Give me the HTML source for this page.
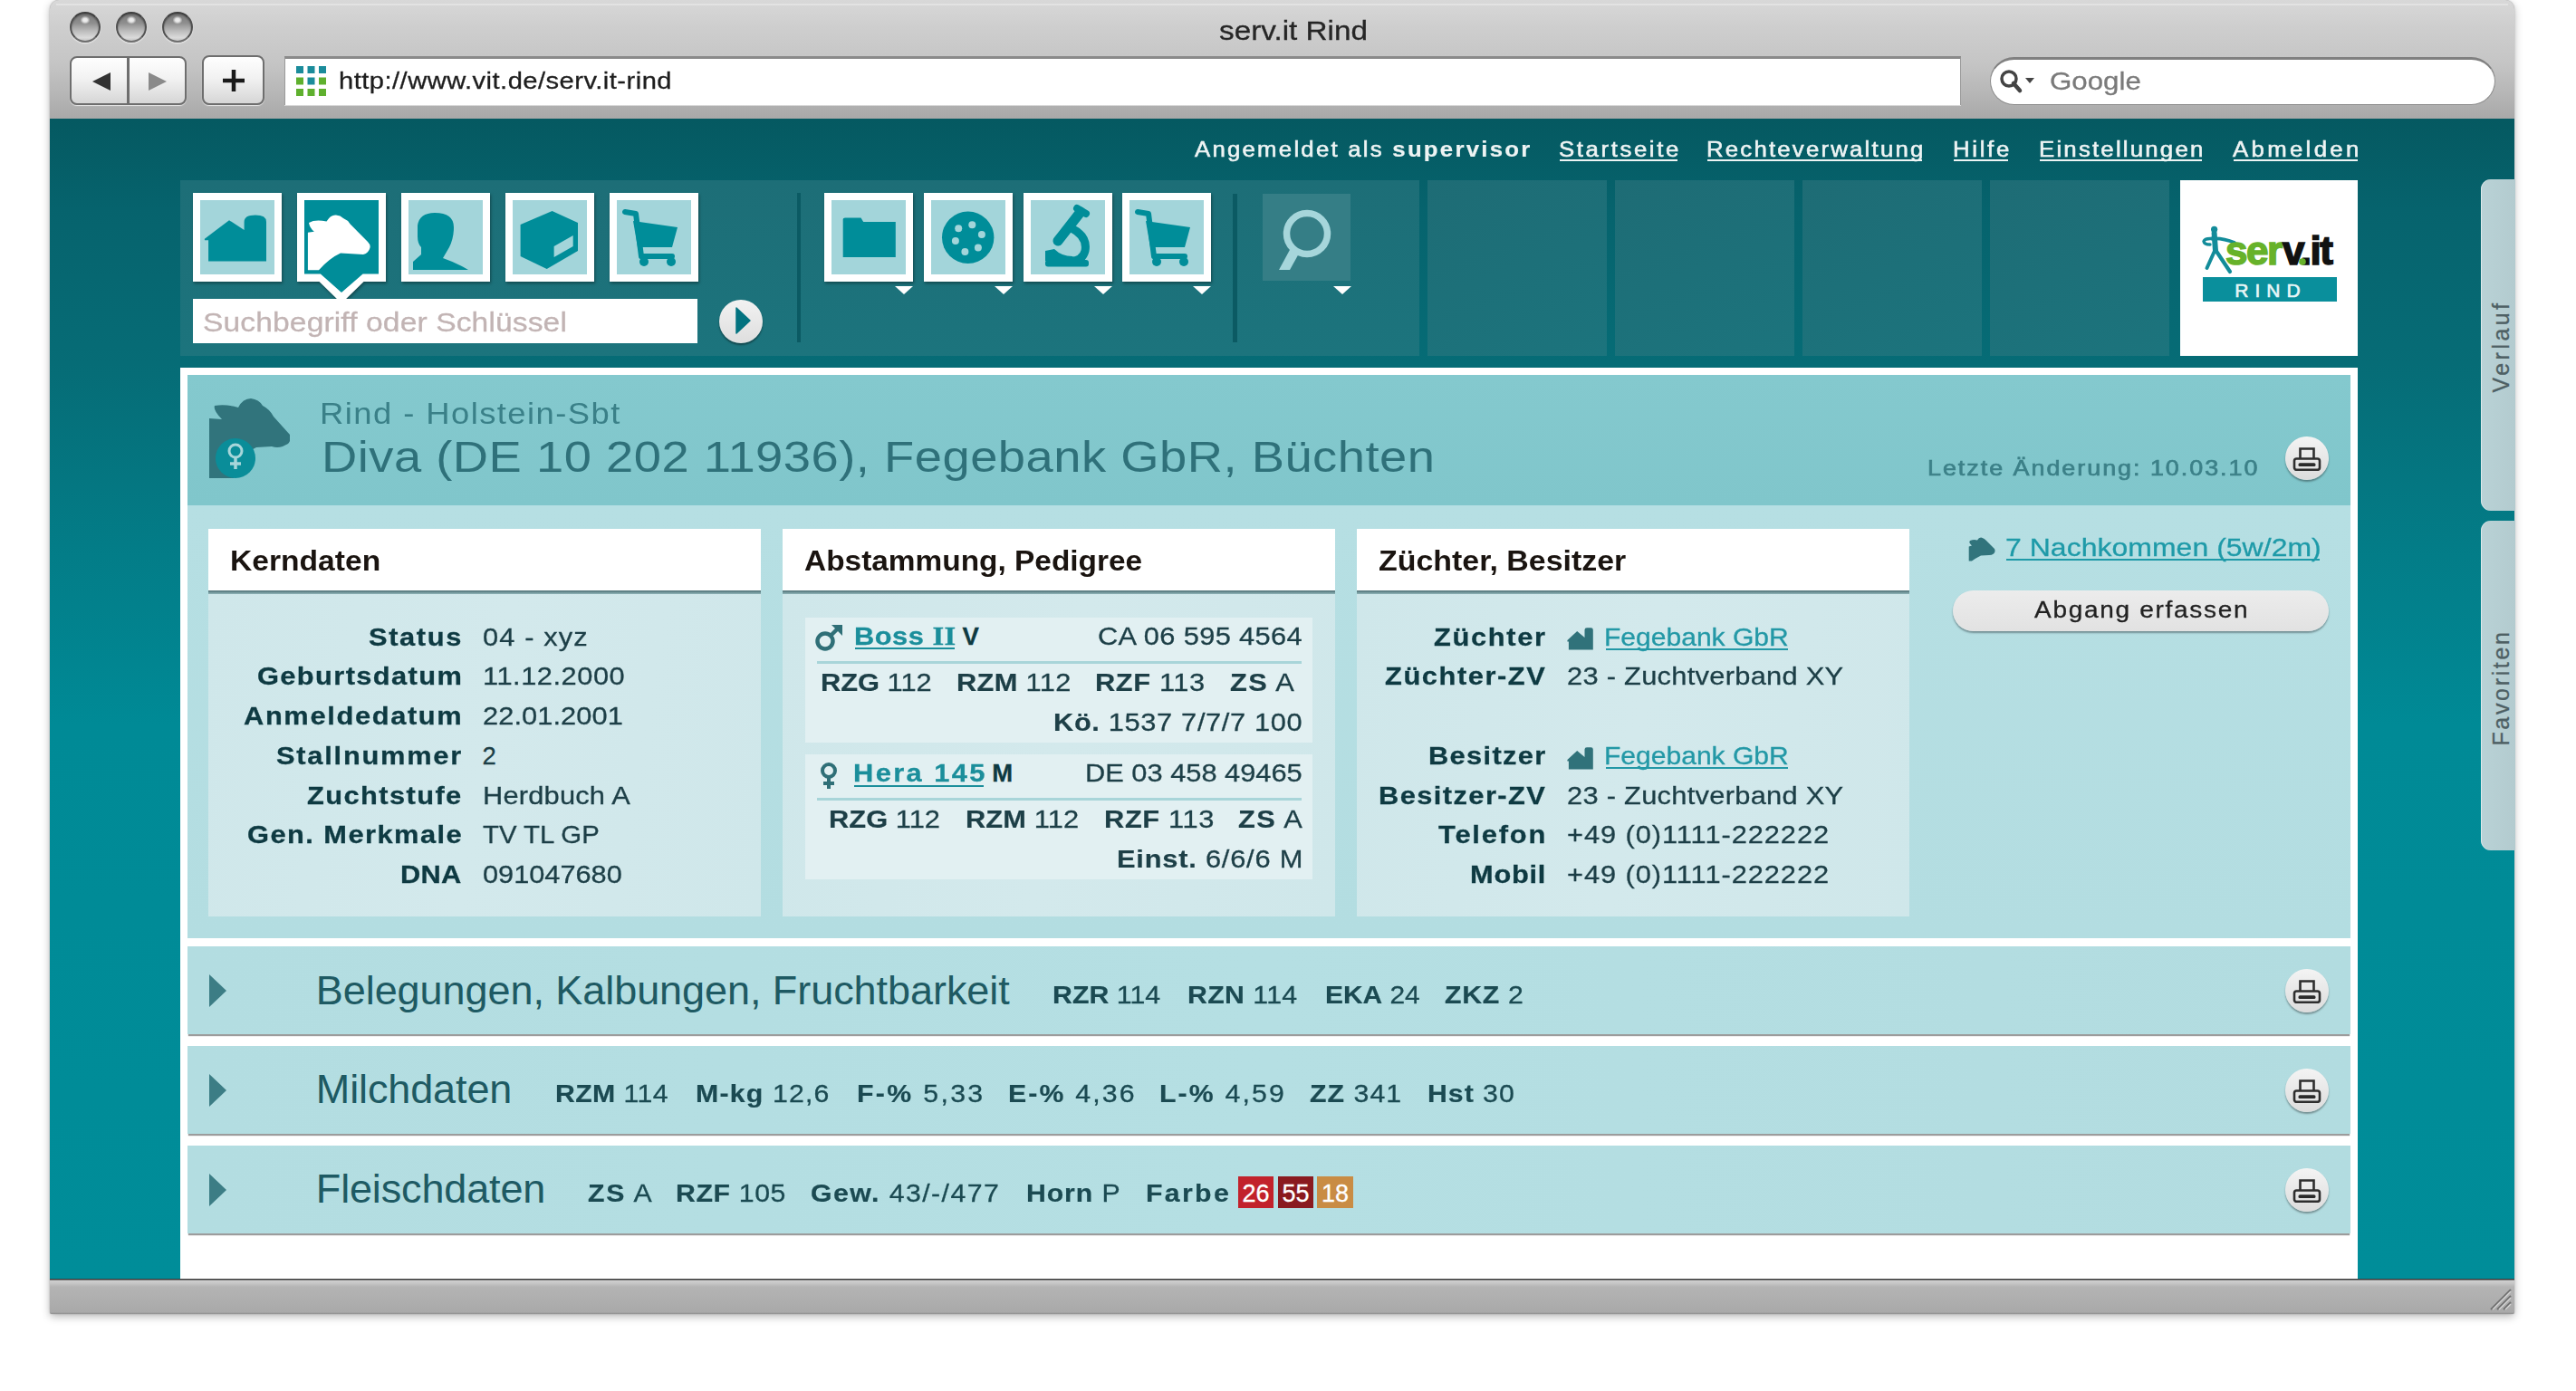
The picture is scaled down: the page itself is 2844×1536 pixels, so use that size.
<!DOCTYPE html>
<html><head><meta charset="utf-8"><title>serv.it Rind</title>
<style>
html,body{margin:0;padding:0;width:2844px;height:1536px;background:#fff;}
body{position:relative;font-family:"Liberation Sans", sans-serif;}
.t{position:absolute;white-space:pre;-webkit-text-stroke:0.3px currentColor;}
.t b{-webkit-text-stroke:0.2px currentColor;}
svg{display:block}
</style></head><body>
<div style="position:absolute;left:55px;top:0px;width:2721px;height:1451px;background:#aaa;border-radius:10px 10px 3px 3px;box-shadow:0 3px 10px rgba(0,0,0,0.28),0 0 2px rgba(0,0,0,0.25);"></div>
<div style="position:absolute;left:55px;top:0px;width:2721px;height:131px;background:linear-gradient(#d8d8d8 0px,#cecece 30px,#c5c5c5 70px,#b3b3b3 110px,#a8a8a8 131px);border-radius:10px 10px 0 0;"></div>
<div style="position:absolute;left:62px;top:4px;width:2707px;height:2px;background:rgba(255,255,255,0.3);"></div>
<div style="position:absolute;left:77px;top:12.5px;width:34px;height:34px;box-sizing:border-box;border-radius:50%;border:2.6px solid;border-color:#3e3e3e #505050 #6e6e6e #505050;background:radial-gradient(ellipse 5.5px 4.5px at 50% 24%,#f2f2f2 0%,#e6e6e6 45%,rgba(200,200,200,0) 100%),linear-gradient(#7c7c7c 0%,#8e8e8e 35%,#bdbdbd 65%,#dadada 88%,#c9c9c9 100%);box-shadow:0 1px 1.5px rgba(255,255,255,0.75),inset 0 1px 2px rgba(0,0,0,0.35);"></div>
<div style="position:absolute;left:128px;top:12.5px;width:34px;height:34px;box-sizing:border-box;border-radius:50%;border:2.6px solid;border-color:#3e3e3e #505050 #6e6e6e #505050;background:radial-gradient(ellipse 5.5px 4.5px at 50% 24%,#f2f2f2 0%,#e6e6e6 45%,rgba(200,200,200,0) 100%),linear-gradient(#7c7c7c 0%,#8e8e8e 35%,#bdbdbd 65%,#dadada 88%,#c9c9c9 100%);box-shadow:0 1px 1.5px rgba(255,255,255,0.75),inset 0 1px 2px rgba(0,0,0,0.35);"></div>
<div style="position:absolute;left:179px;top:12.5px;width:34px;height:34px;box-sizing:border-box;border-radius:50%;border:2.6px solid;border-color:#3e3e3e #505050 #6e6e6e #505050;background:radial-gradient(ellipse 5.5px 4.5px at 50% 24%,#f2f2f2 0%,#e6e6e6 45%,rgba(200,200,200,0) 100%),linear-gradient(#7c7c7c 0%,#8e8e8e 35%,#bdbdbd 65%,#dadada 88%,#c9c9c9 100%);box-shadow:0 1px 1.5px rgba(255,255,255,0.75),inset 0 1px 2px rgba(0,0,0,0.35);"></div>
<div style="position:absolute;left:77px;top:62px;width:129px;height:54px;background:linear-gradient(#fefefe,#f2f2f2 45%,#d6d6d6);border:2px solid #6e6e6e;box-sizing:border-box;border-radius:8px;box-shadow:0 1px 1px rgba(255,255,255,0.7);"></div>
<div style="position:absolute;left:140px;top:63px;width:3px;height:52px;background:#6e6e6e;"></div>
<svg style="position:absolute;left:100px;top:78px;" width="35" height="24" viewBox="0 0 35 24"><path d="M2,12 L22,2 L22,22 Z" fill="#333"/></svg>
<svg style="position:absolute;left:160px;top:78px;" width="35" height="24" viewBox="0 0 35 24"><path d="M32,12 L12,2 L12,22 Z" fill="#8a8a8a" transform="translate(-8,0)"/></svg>
<div style="position:absolute;left:223px;top:61px;width:69px;height:55px;background:linear-gradient(#fefefe,#f2f2f2 45%,#d6d6d6);border:2px solid #6e6e6e;box-sizing:border-box;border-radius:8px;box-shadow:0 1px 1px rgba(255,255,255,0.7);"></div>
<svg style="position:absolute;left:244px;top:75px;" width="28" height="28" viewBox="0 0 28 28"><path d="M14,2 V26 M2,14 H26" stroke="#1a1a1a" stroke-width="4.5" fill="none"/></svg>
<div style="position:absolute;left:314px;top:62px;width:1851px;height:54px;background:#fff;border-top:3px solid #8a8a8a;border-left:1px solid #9a9a9a;border-right:1px solid #9a9a9a;box-sizing:border-box;box-shadow:0 1px 0 rgba(255,255,255,0.5);"></div>
<svg style="position:absolute;left:327px;top:73px;" width="34" height="34" viewBox="0 0 34 34"><rect x="0.0" y="0.0" width="8" height="8" fill="#1b8c9b"/><rect x="12.5" y="0.0" width="8" height="8" fill="#1b8c9b"/><rect x="25.0" y="0.0" width="8" height="8" fill="#1b8c9b"/><rect x="0.0" y="12.5" width="8" height="8" fill="#5fb02e"/><rect x="12.5" y="12.5" width="8" height="8" fill="#1b8c9b"/><rect x="25.0" y="12.5" width="8" height="8" fill="#5fb02e"/><rect x="0.0" y="25.0" width="8" height="8" fill="#5fb02e"/><rect x="12.5" y="25.0" width="8" height="8" fill="#5fb02e"/><rect x="25.0" y="25.0" width="8" height="8" fill="#5fb02e"/></svg>
<div style="position:absolute;left:2197px;top:63px;width:558px;height:53px;background:#fff;border-radius:27px;border:1px solid #8c8c8c;border-top:3px solid #808080;box-sizing:border-box;"></div>
<svg style="position:absolute;left:2206px;top:76px;" width="46" height="30" viewBox="0 0 46 30"><circle cx="12" cy="11" r="8" stroke="#444" stroke-width="3.5" fill="none"/><path d="M17,16 L24,24" stroke="#444" stroke-width="4.5" stroke-linecap="round"/><path d="M30,10 L40,10 L35,16 Z" fill="#444"/></svg>
<div style="position:absolute;left:55px;top:131px;width:2721px;height:1281px;background:linear-gradient(#055961 0px,#06636d 100px,#066c76 270px,#037c87 470px,#008a96 670px,#008d99 1281px);"></div>
<div style="position:absolute;left:55px;top:1412px;width:2721px;height:39px;background:linear-gradient(#3a3a3a 0px,#3a3a3a 1px,#cfcfcf 2px,#c6c6c6 5px,#b4b4b4 9px,#a9a9a9 37px,#8e8e8e 39px);border-radius:0 0 2px 2px;"></div>
<svg style="position:absolute;left:2748px;top:1422px;" width="26" height="26" viewBox="0 0 26 26"><path d="M2,24 L24,2 M9,24 L24,9 M16,24 L24,16" stroke="#707070" stroke-width="2"/><path d="M4,24 L24,4 M11,24 L24,11 M18,24 L24,18" stroke="#d6d6d6" stroke-width="1.3"/></svg>
<div style="position:absolute;left:2739px;top:198px;width:38px;height:366px;background:linear-gradient(90deg,#b9d2d6,#b3cbcf);border-radius:11px 0 0 11px;box-shadow:inset 1px 0 0 rgba(255,255,255,0.5);"></div>
<div style="position:absolute;left:2739px;top:575px;width:38px;height:364px;background:linear-gradient(90deg,#b9d2d6,#b3cbcf);border-radius:11px 0 0 11px;box-shadow:inset 1px 0 0 rgba(255,255,255,0.5);"></div>
<div style="position:absolute;left:199px;top:199px;width:1368px;height:194px;background:linear-gradient(180deg,#1d6e77,#1c747d);"></div>
<div style="position:absolute;left:1576px;top:199px;width:198px;height:194px;background:linear-gradient(160deg,#1e6c75,#1c747d);"></div>
<div style="position:absolute;left:1783px;top:199px;width:198px;height:194px;background:linear-gradient(160deg,#1e6c75,#1c747d);"></div>
<div style="position:absolute;left:1990px;top:199px;width:198px;height:194px;background:linear-gradient(160deg,#1e6c75,#1c747d);"></div>
<div style="position:absolute;left:2197px;top:199px;width:198px;height:194px;background:linear-gradient(160deg,#1e6c75,#1c747d);"></div>
<div style="position:absolute;left:2407px;top:199px;width:196px;height:194px;background:#fff;"></div>
<div style="position:absolute;left:213px;top:213px;width:98px;height:98px;background:#fff;box-shadow:1px 2px 3px rgba(0,0,0,0.35);"></div>
<div style="position:absolute;left:221px;top:221px;width:82px;height:82px;background:#a3d5da;"></div>
<svg style="position:absolute;left:221px;top:221px;" width="82" height="82" viewBox="0 0 82 82"><path d="M4.9,42.7 L32,22.2 L48.6,33 L48.6,24 Q48.6,16.6 61,16.6 Q73,16.6 73,24 L73,67.5 L9.1,67.5 L9.1,44.2 L4.9,44.2 Z" fill="#008d99"/></svg>
<div style="position:absolute;left:443px;top:213px;width:98px;height:98px;background:#fff;box-shadow:1px 2px 3px rgba(0,0,0,0.35);"></div>
<div style="position:absolute;left:451px;top:221px;width:82px;height:82px;background:#a3d5da;"></div>
<svg style="position:absolute;left:451px;top:221px;" width="82" height="82" viewBox="0 0 82 82"><path d="M5,68 L14,60 L14,52 Q10,48 10,40 L10,28 Q12,14 29,14 Q50,14 50,30 Q50,42 45,52 L38,64 Q55,70 66,77 L5,77 Z" fill="#008d99"/></svg>
<div style="position:absolute;left:558px;top:213px;width:98px;height:98px;background:#fff;box-shadow:1px 2px 3px rgba(0,0,0,0.35);"></div>
<div style="position:absolute;left:566px;top:221px;width:82px;height:82px;background:#a3d5da;"></div>
<svg style="position:absolute;left:566px;top:221px;" width="82" height="82" viewBox="0 0 82 82"><path d="M8.6,27 L43.6,12 L72,25 L72,56 L37.7,76 L8.6,62 Z" fill="#008d99"/><path d="M45.6,51 L66.7,39 L66.7,51 L45.6,63 Z" fill="#a3d5da"/></svg>
<div style="position:absolute;left:673px;top:213px;width:98px;height:98px;background:#fff;box-shadow:1px 2px 3px rgba(0,0,0,0.35);"></div>
<div style="position:absolute;left:681px;top:221px;width:82px;height:82px;background:#a3d5da;"></div>
<svg style="position:absolute;left:681px;top:221px;" width="82" height="82" viewBox="0 0 82 82"><path d="M9,13 L21,15 L27,62 L61,62" stroke="#008d99" stroke-width="6" fill="none" stroke-linecap="round" stroke-linejoin="round"/><path d="M18,23 L67,30 L61,52 L23,52 Z" fill="#008d99"/><circle cx="30" cy="68" r="5" fill="#008d99"/><circle cx="60" cy="68" r="5" fill="#008d99"/></svg>
<svg style="position:absolute;left:328px;top:213px;filter:drop-shadow(1px 2px 1.5px rgba(0,0,0,0.35));" width="100" height="126" viewBox="0 0 100 126"><path d="M0,0 H98 V98 H73.6 L49,122 L24.5,98 H0 Z" fill="#fff"/><path d="M8,8 H90 V89.5 H72.6 L49,110 L25.9,89.5 H8 Z" fill="#008d99"/><path transform="translate(8,8)" d="M3.9,77.3 L3.9,35.7 L10.9,34.8 Q6,31 5,25 Q12,21 24.5,23.6 Q29,16 35,16.6 Q40,17 43,20 Q48,22 50.7,26.4 L70,46 Q74,50 72,54 Q70,59 65,60 L40,58.6 Q28,64 16,77.3 Z" fill="#fff"/></svg>
<div style="position:absolute;left:213px;top:330px;width:557px;height:49px;background:#fff;"></div>
<div style="position:absolute;left:794px;top:331px;width:48px;height:48px;border-radius:50%;background:linear-gradient(#f2f2f2,#dedede);box-shadow:0 2px 2px rgba(0,0,0,0.4);"></div>
<svg style="position:absolute;left:810px;top:338px;" width="22" height="32" viewBox="0 0 22 32"><path d="M3,2 L18,16 L3,30 Z" fill="#037380" stroke="#037380" stroke-width="1.5" stroke-linejoin="round"/></svg>
<div style="position:absolute;left:880px;top:213px;width:4px;height:165px;background:#0b5a63;"></div>
<div style="position:absolute;left:910px;top:213px;width:98px;height:98px;background:#fff;box-shadow:1px 2px 3px rgba(0,0,0,0.35);"></div>
<div style="position:absolute;left:918px;top:221px;width:82px;height:82px;background:#a3d5da;"></div>
<svg style="position:absolute;left:918px;top:221px;" width="82" height="82" viewBox="0 0 82 82"><path d="M12.7,21 Q12.7,19.4 15,19.4 L32.5,19.4 L35.2,24 L70.8,24 L70.8,63 L12.7,63 Z" fill="#008d99"/></svg>
<svg style="position:absolute;left:988px;top:316px;" width="20" height="10" viewBox="0 0 20 10"><path d="M0,0 L20,0 L10,9 Z" fill="#fff"/></svg>
<div style="position:absolute;left:1020px;top:213px;width:98px;height:98px;background:#fff;box-shadow:1px 2px 3px rgba(0,0,0,0.35);"></div>
<div style="position:absolute;left:1028px;top:221px;width:82px;height:82px;background:#a3d5da;"></div>
<svg style="position:absolute;left:1028px;top:221px;" width="82" height="82" viewBox="0 0 82 82"><circle cx="40.7" cy="41.2" r="28.7" fill="#008d99"/><circle cx="45.3" cy="27.3" r="4" fill="#a3d5da"/><circle cx="55.9" cy="37.9" r="4" fill="#a3d5da"/><circle cx="51.9" cy="52.4" r="4" fill="#a3d5da"/><circle cx="37.4" cy="57" r="4" fill="#a3d5da"/><circle cx="26.9" cy="45.1" r="4" fill="#a3d5da"/><circle cx="30.2" cy="31.3" r="4" fill="#a3d5da"/></svg>
<svg style="position:absolute;left:1098px;top:316px;" width="20" height="10" viewBox="0 0 20 10"><path d="M0,0 L20,0 L10,9 Z" fill="#fff"/></svg>
<div style="position:absolute;left:1130px;top:213px;width:98px;height:98px;background:#fff;box-shadow:1px 2px 3px rgba(0,0,0,0.35);"></div>
<div style="position:absolute;left:1138px;top:221px;width:82px;height:82px;background:#a3d5da;"></div>
<svg style="position:absolute;left:1138px;top:221px;" width="82" height="82" viewBox="0 0 82 82"><g stroke="#008d99" fill="none" stroke-linecap="round"><path d="M55,13 L30,45" stroke-width="11"/><path d="M51,9 L61,15" stroke-width="8"/><path d="M45,31 Q63,40 60,56 Q57,68 42,67" stroke-width="9"/></g><path d="M16,56 L26,54 Q34,62 46,62 L46,67 L16,67 Z" fill="#008d99"/><rect x="16" y="66" width="48" height="7.5" rx="3" fill="#008d99"/></svg>
<svg style="position:absolute;left:1208px;top:316px;" width="20" height="10" viewBox="0 0 20 10"><path d="M0,0 L20,0 L10,9 Z" fill="#fff"/></svg>
<div style="position:absolute;left:1239px;top:213px;width:98px;height:98px;background:#fff;box-shadow:1px 2px 3px rgba(0,0,0,0.35);"></div>
<div style="position:absolute;left:1247px;top:221px;width:82px;height:82px;background:#a3d5da;"></div>
<svg style="position:absolute;left:1247px;top:221px;" width="82" height="82" viewBox="0 0 82 82"><path d="M9,13 L21,15 L27,62 L61,62" stroke="#008d99" stroke-width="6" fill="none" stroke-linecap="round" stroke-linejoin="round"/><path d="M18,23 L67,30 L61,52 L23,52 Z" fill="#008d99"/><circle cx="30" cy="68" r="5" fill="#008d99"/><circle cx="60" cy="68" r="5" fill="#008d99"/></svg>
<svg style="position:absolute;left:1317px;top:316px;" width="20" height="10" viewBox="0 0 20 10"><path d="M0,0 L20,0 L10,9 Z" fill="#fff"/></svg>
<div style="position:absolute;left:1361px;top:214px;width:5px;height:164px;background:#0b5a63;"></div>
<div style="position:absolute;left:1394px;top:214px;width:97px;height:96px;background:#357e86;"></div>
<svg style="position:absolute;left:1394px;top:214px;" width="97" height="97" viewBox="0 0 97 97"><circle cx="49" cy="44" r="22.5" stroke="#a6d6db" stroke-width="7.5" fill="none"/><path d="M31,60 L18,84 L30,84 L40,66 Z" fill="#a6d6db"/></svg>
<svg style="position:absolute;left:1472px;top:316px;" width="20" height="10" viewBox="0 0 20 10"><path d="M0,0 L20,0 L10,9 Z" fill="#fff"/></svg>
<svg style="position:absolute;left:2426px;top:248px;" width="160" height="90" viewBox="0 0 160 90">
<g fill="none" stroke="#138c9a" stroke-linecap="round" stroke-linejoin="round">
<circle cx="18.6" cy="5.3" r="3.6" fill="#138c9a" stroke="none"/>
<path d="M18.6,9.5 L20,29" stroke-width="6"/>
<path d="M16,15.5 Q28,14.5 41,20" stroke-width="3.8"/>
<path d="M16,15.5 Q8,15 7,18.5 Q7.5,22 14,22" stroke-width="3.4"/>
<path d="M19.5,28 L10.5,48" stroke-width="4"/>
<path d="M20,28 L36,52" stroke-width="4.2"/>
</g>
<text x="31" y="44" font-family="Liberation Sans" font-weight="bold" font-size="44" fill="#67b22a" stroke="#67b22a" stroke-width="1.6" letter-spacing="-1.5">ser</text>
<text x="94" y="44" font-family="Liberation Sans" font-weight="bold" font-size="44" fill="#111" stroke="#111" stroke-width="1.6" letter-spacing="-1.5">v.it</text>
<circle cx="116" cy="41" r="3.8" fill="#67b22a"/>
<rect x="6" y="58" width="148" height="27" fill="#0a8f9c"/>
<text x="81" y="79.5" text-anchor="middle" font-family="Liberation Sans" font-size="21" fill="#e8f6f7" stroke="#e8f6f7" stroke-width="0.6" letter-spacing="7">RIND</text>
</svg>
<div style="position:absolute;left:199px;top:406px;width:2404px;height:1006px;background:#fff;"></div>
<div style="position:absolute;left:207px;top:414px;width:2388px;height:144px;background:linear-gradient(180deg,#84c9ce,#80c6cb);"></div>
<div style="position:absolute;left:207px;top:558px;width:2388px;height:478px;background:linear-gradient(180deg,#b6dfe3,#b3dde1);"></div>
<svg style="position:absolute;left:228px;top:438px;" width="92" height="92" viewBox="0 0 92 92"><path d="M3,90 L3,24 L17,25 Q7,15 9,10 Q22,8 35,12 Q40,2 49,2 Q58,3 62,10 Q70,14 74,22 L92,42 Q94,48 90,52 L84,55 Q78,57 72,55 L55,56 Q40,62 30,90 Z" fill="#31747c"/><circle cx="32" cy="68" r="22" fill="#0a8d99"/><circle cx="32" cy="60" r="7" stroke="#a7d6da" stroke-width="3" fill="none"/><path d="M32,67 L32,80 M26,74 L38,74" stroke="#a7d6da" stroke-width="3.5"/></svg>
<div style="position:absolute;left:2523px;top:482px;width:48px;height:48px;border-radius:50%;background:linear-gradient(#f4f4f4,#dcdcdc);box-shadow:0 2px 2px rgba(0,0,0,0.35);"></div>
<svg style="position:absolute;left:2531px;top:493px;" width="32" height="27" viewBox="0 0 32 27"><path d="M8.5,13.5 L8.5,2.5 L23.5,2.5 L23.5,13.5" stroke="#2e2e2e" stroke-width="2.6" fill="none"/><rect x="2" y="13.5" width="28" height="12.3" rx="2.5" stroke="#2e2e2e" stroke-width="2.6" fill="none"/><rect x="6.5" y="18.3" width="19" height="3.8" rx="1.6" fill="#2a2a2a"/></svg>
<div style="position:absolute;left:230px;top:584px;width:610px;height:68px;background:#fff;"></div>
<div style="position:absolute;left:230px;top:652px;width:610px;height:4px;background:linear-gradient(#4d6f74,#8fb4b8);"></div>
<div style="position:absolute;left:230px;top:656px;width:610px;height:356px;background:linear-gradient(100deg,#cfe7ea,#d3e9ec 50%,#cfe7ea);"></div>
<div style="position:absolute;left:864px;top:584px;width:610px;height:68px;background:#fff;"></div>
<div style="position:absolute;left:864px;top:652px;width:610px;height:4px;background:linear-gradient(#4d6f74,#8fb4b8);"></div>
<div style="position:absolute;left:864px;top:656px;width:610px;height:356px;background:linear-gradient(100deg,#cfe7ea,#d3e9ec 50%,#cfe7ea);"></div>
<div style="position:absolute;left:1498px;top:584px;width:610px;height:68px;background:#fff;"></div>
<div style="position:absolute;left:1498px;top:652px;width:610px;height:4px;background:linear-gradient(#4d6f74,#8fb4b8);"></div>
<div style="position:absolute;left:1498px;top:656px;width:610px;height:356px;background:linear-gradient(100deg,#cfe7ea,#d3e9ec 50%,#cfe7ea);"></div>
<div style="position:absolute;left:889px;top:682px;width:560px;height:138px;background:#e2f0f2;"></div>
<div style="position:absolute;left:889px;top:833px;width:560px;height:138px;background:#e2f0f2;"></div>
<div style="position:absolute;left:902px;top:730px;width:535px;height:3px;background:#a8d5d9;"></div>
<div style="position:absolute;left:902px;top:881px;width:535px;height:3px;background:#a8d5d9;"></div>
<svg style="position:absolute;left:899px;top:687px;" width="34" height="34" viewBox="0 0 34 34"><circle cx="12" cy="21" r="8.5" stroke="#2f6f77" stroke-width="4.5" fill="none"/><path d="M18,15 L28,5" stroke="#2f6f77" stroke-width="4.5"/><path d="M19,3 L31,3 L31,15 Z" fill="#2f6f77"/></svg>
<svg style="position:absolute;left:900px;top:841px;" width="30" height="32" viewBox="0 0 30 32"><circle cx="15" cy="10" r="7" stroke="#2f6f77" stroke-width="4" fill="none"/><path d="M15,17 L15,30 M9,24 L21,24" stroke="#2f6f77" stroke-width="4"/></svg>
<svg style="position:absolute;left:1730px;top:693px;" width="30" height="27" viewBox="0 0 30 27"><path d="M0.4,14 L11.2,4 L19.5,11 L19.5,2.5 Q19.5,0.3 22,0.3 L26.5,0.3 Q28.8,0.3 28.8,2.5 L28.8,24.5 L1.9,24.5 L1.9,15.5 L0.4,15.5 Z" fill="#30727a"/></svg>
<svg style="position:absolute;left:1730px;top:825px;" width="30" height="27" viewBox="0 0 30 27"><path d="M0.4,14 L11.2,4 L19.5,11 L19.5,2.5 Q19.5,0.3 22,0.3 L26.5,0.3 Q28.8,0.3 28.8,2.5 L28.8,24.5 L1.9,24.5 L1.9,15.5 L0.4,15.5 Z" fill="#30727a"/></svg>
<svg style="position:absolute;left:2171px;top:591px;" width="34" height="30" viewBox="0 0 34 30"><path d="M2.7,28.6 L2.7,12.4 L6,11.5 Q2,8 4,6 Q8,4.5 12,5.5 Q14,2 17,2.7 Q20,3.5 22,6 L31,15 Q32.5,18 30,20.5 Q28,22 25,22 L16,22.5 Q9,26 6,28.6 Z" fill="#31747c"/></svg>
<div style="position:absolute;left:2156px;top:652px;width:415px;height:45px;border-radius:23px;background:linear-gradient(#ececec,#e2e2e2);box-shadow:0 2px 2px rgba(60,80,85,0.55);"></div>
<div style="position:absolute;left:207px;top:1045px;width:2388px;height:97px;background:linear-gradient(90deg,#b3dde1,#b5dfe3 50%,#b2dce0);box-shadow:0 3px 1px -1px rgba(90,90,90,0.6);"></div>
<svg style="position:absolute;left:230px;top:1075px;" width="22" height="40" viewBox="0 0 22 40"><path d="M1,1 L20,19 L1,37 Z" fill="#3c7d85"/></svg>
<div style="position:absolute;left:2523px;top:1070px;width:48px;height:48px;border-radius:50%;background:linear-gradient(#f4f4f4,#dcdcdc);box-shadow:0 2px 2px rgba(0,0,0,0.35);"></div>
<svg style="position:absolute;left:2531px;top:1081px;" width="32" height="27" viewBox="0 0 32 27"><path d="M8.5,13.5 L8.5,2.5 L23.5,2.5 L23.5,13.5" stroke="#2e2e2e" stroke-width="2.6" fill="none"/><rect x="2" y="13.5" width="28" height="12.3" rx="2.5" stroke="#2e2e2e" stroke-width="2.6" fill="none"/><rect x="6.5" y="18.3" width="19" height="3.8" rx="1.6" fill="#2a2a2a"/></svg>
<div style="position:absolute;left:207px;top:1155px;width:2388px;height:97px;background:linear-gradient(90deg,#b3dde1,#b5dfe3 50%,#b2dce0);box-shadow:0 3px 1px -1px rgba(90,90,90,0.6);"></div>
<svg style="position:absolute;left:230px;top:1185px;" width="22" height="40" viewBox="0 0 22 40"><path d="M1,1 L20,19 L1,37 Z" fill="#3c7d85"/></svg>
<div style="position:absolute;left:2523px;top:1180px;width:48px;height:48px;border-radius:50%;background:linear-gradient(#f4f4f4,#dcdcdc);box-shadow:0 2px 2px rgba(0,0,0,0.35);"></div>
<svg style="position:absolute;left:2531px;top:1191px;" width="32" height="27" viewBox="0 0 32 27"><path d="M8.5,13.5 L8.5,2.5 L23.5,2.5 L23.5,13.5" stroke="#2e2e2e" stroke-width="2.6" fill="none"/><rect x="2" y="13.5" width="28" height="12.3" rx="2.5" stroke="#2e2e2e" stroke-width="2.6" fill="none"/><rect x="6.5" y="18.3" width="19" height="3.8" rx="1.6" fill="#2a2a2a"/></svg>
<div style="position:absolute;left:207px;top:1265px;width:2388px;height:97px;background:linear-gradient(90deg,#b3dde1,#b5dfe3 50%,#b2dce0);box-shadow:0 3px 1px -1px rgba(90,90,90,0.6);"></div>
<svg style="position:absolute;left:230px;top:1295px;" width="22" height="40" viewBox="0 0 22 40"><path d="M1,1 L20,19 L1,37 Z" fill="#3c7d85"/></svg>
<div style="position:absolute;left:2523px;top:1290px;width:48px;height:48px;border-radius:50%;background:linear-gradient(#f4f4f4,#dcdcdc);box-shadow:0 2px 2px rgba(0,0,0,0.35);"></div>
<svg style="position:absolute;left:2531px;top:1301px;" width="32" height="27" viewBox="0 0 32 27"><path d="M8.5,13.5 L8.5,2.5 L23.5,2.5 L23.5,13.5" stroke="#2e2e2e" stroke-width="2.6" fill="none"/><rect x="2" y="13.5" width="28" height="12.3" rx="2.5" stroke="#2e2e2e" stroke-width="2.6" fill="none"/><rect x="6.5" y="18.3" width="19" height="3.8" rx="1.6" fill="#2a2a2a"/></svg>
<div style="position:absolute;left:1367px;top:1299px;width:39px;height:35px;background:#c2222b;"></div>
<div style="position:absolute;left:1411px;top:1299px;width:39px;height:35px;background:#8a1a1f;"></div>
<div style="position:absolute;left:1454px;top:1299px;width:40px;height:35px;background:#c98c44;"></div>
<div class="t " style="left:1345.5px;top:18.7px;font-size:30px;line-height:30px;font-weight:400;color:#262626;transform:scaleX(1.1094);transform-origin:0 0;">serv.it Rind</div>
<div class="t " style="left:373.7px;top:76.0px;font-size:26px;line-height:26px;font-weight:400;color:#1e1e1e;letter-spacing:0.42px;transform:scaleX(1.1200);transform-origin:0 0;">http://www.vit.de/serv.it-rind</div>
<div class="t " style="left:2262.6px;top:75.8px;font-size:28px;line-height:28px;font-weight:400;color:#7a7a7a;transform:scaleX(1.1163);transform-origin:0 0;">Google</div>
<div class="t " style="left:1318.8px;top:154.1px;font-size:23px;line-height:23px;font-weight:400;color:#eef4f4;letter-spacing:2.00px;transform:scaleX(1.1200);transform-origin:0 0;-webkit-text-stroke:0.55px currentColor;">Angemeldet als <b>supervisor</b></div>
<div style="position:absolute;left:1722.0px;top:176.0px;width:130.0px;height:2.0px;background:#eef4f4;"></div>
<div class="t " style="left:1720.8px;top:154.1px;font-size:23px;line-height:23px;font-weight:400;color:#eef4f4;letter-spacing:2.33px;transform:scaleX(1.1200);transform-origin:0 0;-webkit-text-stroke:0.55px currentColor;">Startseite</div>
<div style="position:absolute;left:1885.0px;top:176.0px;width:237.0px;height:2.0px;background:#eef4f4;"></div>
<div class="t " style="left:1883.8px;top:154.1px;font-size:23px;line-height:23px;font-weight:400;color:#eef4f4;letter-spacing:1.97px;transform:scaleX(1.1200);transform-origin:0 0;-webkit-text-stroke:0.55px currentColor;">Rechteverwaltung</div>
<div style="position:absolute;left:2157.0px;top:176.0px;width:60.0px;height:2.0px;background:#eef4f4;"></div>
<div class="t " style="left:2155.8px;top:154.1px;font-size:23px;line-height:23px;font-weight:400;color:#eef4f4;letter-spacing:2.40px;transform:scaleX(1.1200);transform-origin:0 0;-webkit-text-stroke:0.55px currentColor;">Hilfe</div>
<div style="position:absolute;left:2252.0px;top:176.0px;width:179.0px;height:2.0px;background:#eef4f4;"></div>
<div class="t " style="left:2250.8px;top:154.1px;font-size:23px;line-height:23px;font-weight:400;color:#eef4f4;letter-spacing:1.98px;transform:scaleX(1.1200);transform-origin:0 0;-webkit-text-stroke:0.55px currentColor;">Einstellungen</div>
<div style="position:absolute;left:2466.0px;top:176.0px;width:137.0px;height:2.0px;background:#eef4f4;"></div>
<div class="t " style="left:2464.8px;top:154.1px;font-size:23px;line-height:23px;font-weight:400;color:#eef4f4;letter-spacing:2.97px;transform:scaleX(1.1200);transform-origin:0 0;-webkit-text-stroke:0.55px currentColor;">Abmelden</div>
<div class="t " style="left:223.5px;top:340.6px;font-size:30px;line-height:30px;font-weight:400;color:#c2b4b4;letter-spacing:0.10px;transform:scaleX(1.1200);transform-origin:0 0;">Suchbegriff oder Schlüssel</div>
<div class="t " style="left:2710.8px;top:369.5px;font-size:25px;line-height:25px;font-weight:400;color:#4e6064;letter-spacing:3.44px;transform:rotate(-90deg);transform-origin:50% 50%;">Verlauf</div>
<div class="t " style="left:2697.2px;top:746.5px;font-size:25px;line-height:25px;font-weight:400;color:#4e6064;letter-spacing:2.66px;transform:rotate(-90deg);transform-origin:50% 50%;">Favoriten</div>
<div class="t " style="left:353.4px;top:441.0px;font-size:32.5px;line-height:32.5px;font-weight:400;color:#3a8088;letter-spacing:1.28px;transform:scaleX(1.1200);transform-origin:0 0;-webkit-text-stroke:0;">Rind - Holstein-Sbt</div>
<div class="t " style="left:354.6px;top:480.0px;font-size:48.5px;line-height:48.5px;font-weight:400;color:#2f717a;letter-spacing:0.45px;transform:scaleX(1.1200);transform-origin:0 0;-webkit-text-stroke:0;">Diva (DE 10 202 11936), Fegebank GbR, Büchten</div>
<div class="t " style="left:2127.8px;top:504.7px;font-size:24px;line-height:24px;font-weight:400;color:#3c8088;letter-spacing:1.77px;transform:scaleX(1.1200);transform-origin:0 0;-webkit-text-stroke:0.7px currentColor;">Letzte Änderung: 10.03.10</div>
<div class="t " style="left:254.4px;top:603.0px;font-size:32px;line-height:32px;font-weight:700;color:#1a1410;transform:scaleX(1.0502);transform-origin:0 0;-webkit-text-stroke:0;">Kerndaten</div>
<div class="t " style="left:887.9px;top:603.0px;font-size:32px;line-height:32px;font-weight:700;color:#1a1410;transform:scaleX(1.0442);transform-origin:0 0;-webkit-text-stroke:0;">Abstammung, Pedigree</div>
<div class="t " style="left:1522.4px;top:603.0px;font-size:32px;line-height:32px;font-weight:700;color:#1a1410;transform:scaleX(1.0595);transform-origin:0 0;-webkit-text-stroke:0;">Züchter, Besitzer</div>
<div class="t " style="left:407.0px;top:689.5px;font-size:27.5px;line-height:27.5px;font-weight:700;color:#0e3a42;letter-spacing:1.47px;transform:scaleX(1.1200);transform-origin:0 0;">Status</div>
<div class="t " style="left:532.6px;top:689.5px;font-size:27.5px;line-height:27.5px;font-weight:400;color:#1d3f47;letter-spacing:1.01px;transform:scaleX(1.1200);transform-origin:0 0;">04 - xyz</div>
<div class="t " style="left:283.6px;top:733.1px;font-size:27.5px;line-height:27.5px;font-weight:700;color:#0e3a42;letter-spacing:1.24px;transform:scaleX(1.1200);transform-origin:0 0;">Geburtsdatum</div>
<div class="t " style="left:532.6px;top:733.1px;font-size:27.5px;line-height:27.5px;font-weight:400;color:#1d3f47;letter-spacing:0.48px;transform:scaleX(1.1200);transform-origin:0 0;">11.12.2000</div>
<div class="t " style="left:268.6px;top:776.8px;font-size:27.5px;line-height:27.5px;font-weight:700;color:#0e3a42;letter-spacing:1.48px;transform:scaleX(1.1200);transform-origin:0 0;">Anmeldedatum</div>
<div class="t " style="left:532.6px;top:776.8px;font-size:27.5px;line-height:27.5px;font-weight:400;color:#1d3f47;letter-spacing:0.06px;transform:scaleX(1.1200);transform-origin:0 0;">22.01.2001</div>
<div class="t " style="left:305.1px;top:820.8px;font-size:27.5px;line-height:27.5px;font-weight:700;color:#0e3a42;letter-spacing:1.58px;transform:scaleX(1.1200);transform-origin:0 0;">Stallnummer</div>
<div class="t " style="left:532.6px;top:820.8px;font-size:27.5px;line-height:27.5px;font-weight:400;color:#1d3f47;">2</div>
<div class="t " style="left:339.1px;top:864.6px;font-size:27.5px;line-height:27.5px;font-weight:700;color:#0e3a42;letter-spacing:1.27px;transform:scaleX(1.1200);transform-origin:0 0;">Zuchtstufe</div>
<div class="t " style="left:532.6px;top:864.6px;font-size:27.5px;line-height:27.5px;font-weight:400;color:#1d3f47;letter-spacing:0.18px;transform:scaleX(1.1200);transform-origin:0 0;">Herdbuch A</div>
<div class="t " style="left:272.6px;top:908.4px;font-size:27.5px;line-height:27.5px;font-weight:700;color:#0e3a42;letter-spacing:1.31px;transform:scaleX(1.1200);transform-origin:0 0;">Gen. Merkmale</div>
<div class="t " style="left:532.6px;top:908.4px;font-size:27.5px;line-height:27.5px;font-weight:400;color:#1d3f47;transform:scaleX(1.0664);transform-origin:0 0;">TV TL GP</div>
<div class="t " style="left:442.2px;top:952.3px;font-size:27.5px;line-height:27.5px;font-weight:700;color:#0e3a42;letter-spacing:0.18px;transform:scaleX(1.1200);transform-origin:0 0;">DNA</div>
<div class="t " style="left:532.6px;top:952.3px;font-size:27.5px;line-height:27.5px;font-weight:400;color:#1d3f47;transform:scaleX(1.1169);transform-origin:0 0;">091047680</div>
<div style="position:absolute;left:944.0px;top:715.0px;width:109.5px;height:2.3px;background:#1b8e9b;"></div>
<div class="t " style="left:942.6px;top:688.8px;font-size:27.5px;line-height:27.5px;font-weight:700;color:#1b8e9b;letter-spacing:0.46px;transform:scaleX(1.1200);transform-origin:0 0;">Boss <span style="font-family:Liberation Serif;font-size:29px">II</span></div>
<div class="t " style="left:1062.6px;top:688.8px;font-size:27.5px;line-height:27.5px;font-weight:700;color:#0e3a42;">V</div>
<div class="t " style="left:1212.2px;top:688.8px;font-size:27.5px;line-height:27.5px;font-weight:400;color:#1d3f47;letter-spacing:0.33px;transform:scaleX(1.1200);transform-origin:0 0;">CA 06 595 4564</div>
<div class="t " style="left:905.6px;top:740.3px;font-size:27.5px;line-height:27.5px;font-weight:400;color:#1d3f47;transform:scaleX(1.1200);transform-origin:0 0;"><b>RZG</b> 112</div>
<div class="t " style="left:1055.6px;top:740.3px;font-size:27.5px;line-height:27.5px;font-weight:400;color:#1d3f47;letter-spacing:0.28px;transform:scaleX(1.1200);transform-origin:0 0;"><b>RZM</b> 112</div>
<div class="t " style="left:1209.1px;top:740.3px;font-size:27.5px;line-height:27.5px;font-weight:400;color:#1d3f47;letter-spacing:0.55px;transform:scaleX(1.1200);transform-origin:0 0;"><b>RZF</b> 113</div>
<div class="t " style="left:1357.6px;top:740.3px;font-size:27.5px;line-height:27.5px;font-weight:400;color:#1d3f47;letter-spacing:1.19px;transform:scaleX(1.1200);transform-origin:0 0;"><b>ZS</b> A</div>
<div class="t " style="left:1163.2px;top:783.5px;font-size:27.5px;line-height:27.5px;font-weight:400;color:#1d3f47;letter-spacing:0.58px;transform:scaleX(1.1200);transform-origin:0 0;"><b>Kö.</b> 1537 7/7/7 100</div>
<div style="position:absolute;left:943.0px;top:866.6px;width:142.6px;height:2.3px;background:#1b8e9b;"></div>
<div class="t " style="left:941.6px;top:840.4px;font-size:27.5px;line-height:27.5px;font-weight:700;color:#1b8e9b;letter-spacing:2.16px;transform:scaleX(1.1200);transform-origin:0 0;">Hera 145</div>
<div class="t " style="left:1095.3px;top:840.4px;font-size:27.5px;line-height:27.5px;font-weight:700;color:#0e3a42;">M</div>
<div class="t " style="left:1198.2px;top:840.4px;font-size:27.5px;line-height:27.5px;font-weight:400;color:#1d3f47;transform:scaleX(1.1199);transform-origin:0 0;">DE 03 458 49465</div>
<div class="t " style="left:915.0px;top:890.8px;font-size:27.5px;line-height:27.5px;font-weight:400;color:#1d3f47;letter-spacing:0.04px;transform:scaleX(1.1200);transform-origin:0 0;"><b>RZG</b> 112</div>
<div class="t " style="left:1066.2px;top:890.8px;font-size:27.5px;line-height:27.5px;font-weight:400;color:#1d3f47;letter-spacing:0.11px;transform:scaleX(1.1200);transform-origin:0 0;"><b>RZM</b> 112</div>
<div class="t " style="left:1218.6px;top:890.8px;font-size:27.5px;line-height:27.5px;font-weight:400;color:#1d3f47;letter-spacing:0.57px;transform:scaleX(1.1200);transform-origin:0 0;"><b>RZF</b> 113</div>
<div class="t " style="left:1367.2px;top:890.8px;font-size:27.5px;line-height:27.5px;font-weight:400;color:#1d3f47;letter-spacing:1.19px;transform:scaleX(1.1200);transform-origin:0 0;"><b>ZS</b> A</div>
<div class="t " style="left:1232.6px;top:934.6px;font-size:27.5px;line-height:27.5px;font-weight:400;color:#1d3f47;letter-spacing:0.70px;transform:scaleX(1.1200);transform-origin:0 0;"><b>Einst.</b> 6/6/6 M</div>
<div class="t " style="left:1583.0px;top:689.5px;font-size:27.5px;line-height:27.5px;font-weight:700;color:#0e3a42;letter-spacing:1.49px;transform:scaleX(1.1200);transform-origin:0 0;">Züchter</div>
<div class="t " style="left:1529.2px;top:733.1px;font-size:27.5px;line-height:27.5px;font-weight:700;color:#0e3a42;letter-spacing:1.41px;transform:scaleX(1.1200);transform-origin:0 0;">Züchter-ZV</div>
<div class="t " style="left:1576.6px;top:820.8px;font-size:27.5px;line-height:27.5px;font-weight:700;color:#0e3a42;letter-spacing:1.21px;transform:scaleX(1.1200);transform-origin:0 0;">Besitzer</div>
<div class="t " style="left:1522.2px;top:864.6px;font-size:27.5px;line-height:27.5px;font-weight:700;color:#0e3a42;letter-spacing:1.28px;transform:scaleX(1.1200);transform-origin:0 0;">Besitzer-ZV</div>
<div class="t " style="left:1587.6px;top:908.4px;font-size:27.5px;line-height:27.5px;font-weight:700;color:#0e3a42;letter-spacing:1.65px;transform:scaleX(1.1200);transform-origin:0 0;">Telefon</div>
<div class="t " style="left:1622.6px;top:952.3px;font-size:27.5px;line-height:27.5px;font-weight:700;color:#0e3a42;letter-spacing:0.66px;transform:scaleX(1.1200);transform-origin:0 0;">Mobil</div>
<div style="position:absolute;left:1772.6px;top:715.7px;width:201.0px;height:2.3px;background:#2398a6;"></div>
<div class="t " style="left:1771.2px;top:689.5px;font-size:27.5px;line-height:27.5px;font-weight:400;color:#2398a6;transform:scaleX(1.0925);transform-origin:0 0;">Fegebank GbR</div>
<div style="position:absolute;left:1772.6px;top:847.0px;width:201.0px;height:2.3px;background:#2398a6;"></div>
<div class="t " style="left:1771.2px;top:820.8px;font-size:27.5px;line-height:27.5px;font-weight:400;color:#2398a6;transform:scaleX(1.0925);transform-origin:0 0;">Fegebank GbR</div>
<div class="t " style="left:1730.1px;top:733.1px;font-size:27.5px;line-height:27.5px;font-weight:400;color:#1d3f47;letter-spacing:0.26px;transform:scaleX(1.1200);transform-origin:0 0;">23 - Zuchtverband XY</div>
<div class="t " style="left:1730.1px;top:864.6px;font-size:27.5px;line-height:27.5px;font-weight:400;color:#1d3f47;letter-spacing:0.26px;transform:scaleX(1.1200);transform-origin:0 0;">23 - Zuchtverband XY</div>
<div class="t " style="left:1730.1px;top:908.4px;font-size:27.5px;line-height:27.5px;font-weight:400;color:#1d3f47;letter-spacing:0.84px;transform:scaleX(1.1200);transform-origin:0 0;">+49 (0)1111-222222</div>
<div class="t " style="left:1730.1px;top:952.3px;font-size:27.5px;line-height:27.5px;font-weight:400;color:#1d3f47;letter-spacing:0.84px;transform:scaleX(1.1200);transform-origin:0 0;">+49 (0)1111-222222</div>
<div style="position:absolute;left:2215.0px;top:617.1px;width:346.0px;height:2.4px;background:#1e9aa8;"></div>
<div class="t " style="left:2213.6px;top:589.9px;font-size:28.5px;line-height:28.5px;font-weight:400;color:#1e9aa8;letter-spacing:0.05px;transform:scaleX(1.1200);transform-origin:0 0;">7 Nachkommen (5w/2m)</div>
<div class="t " style="left:2245.8px;top:660.9px;font-size:25px;line-height:25px;font-weight:400;color:#222;letter-spacing:1.52px;transform:scaleX(1.1200);transform-origin:0 0;">Abgang erfassen</div>
<div class="t " style="left:348.8px;top:1070.7px;font-size:45px;line-height:45px;font-weight:400;color:#1e5a63;letter-spacing:-0.06px;-webkit-text-stroke:0;">Belegungen, Kalbungen, Fruchtbarkeit</div>
<div class="t " style="left:348.8px;top:1180.0px;font-size:45px;line-height:45px;font-weight:400;color:#1e5a63;letter-spacing:-0.12px;-webkit-text-stroke:0;">Milchdaten</div>
<div class="t " style="left:348.8px;top:1290.0px;font-size:45px;line-height:45px;font-weight:400;color:#1e5a63;letter-spacing:-0.15px;-webkit-text-stroke:0;">Fleischdaten</div>
<div class="t " style="left:1161.7px;top:1085.9px;font-size:27px;line-height:27px;font-weight:400;color:#1b4a52;letter-spacing:0.06px;transform:scaleX(1.1200);transform-origin:0 0;"><b>RZR</b> 114</div>
<div class="t " style="left:1311.2px;top:1085.9px;font-size:27px;line-height:27px;font-weight:400;color:#1b4a52;letter-spacing:0.36px;transform:scaleX(1.1200);transform-origin:0 0;"><b>RZN</b> 114</div>
<div class="t " style="left:1462.7px;top:1085.9px;font-size:27px;line-height:27px;font-weight:400;color:#1b4a52;transform:scaleX(1.1072);transform-origin:0 0;"><b>EKA</b> 24</div>
<div class="t " style="left:1594.7px;top:1085.9px;font-size:27px;line-height:27px;font-weight:400;color:#1b4a52;letter-spacing:0.60px;transform:scaleX(1.1200);transform-origin:0 0;"><b>ZKZ</b> 2</div>
<div class="t " style="left:613.4px;top:1194.6px;font-size:27px;line-height:27px;font-weight:400;color:#1b4a52;letter-spacing:0.36px;transform:scaleX(1.1200);transform-origin:0 0;"><b>RZM</b> 114</div>
<div class="t " style="left:767.6px;top:1194.6px;font-size:27px;line-height:27px;font-weight:400;color:#1b4a52;letter-spacing:1.07px;transform:scaleX(1.1200);transform-origin:0 0;"><b>M-kg</b> 12,6</div>
<div class="t " style="left:945.6px;top:1194.6px;font-size:27px;line-height:27px;font-weight:400;color:#1b4a52;letter-spacing:2.10px;transform:scaleX(1.1200);transform-origin:0 0;"><b>F-%</b> 5,33</div>
<div class="t " style="left:1113.2px;top:1194.6px;font-size:27px;line-height:27px;font-weight:400;color:#1b4a52;letter-spacing:1.95px;transform:scaleX(1.1200);transform-origin:0 0;"><b>E-%</b> 4,36</div>
<div class="t " style="left:1280.1px;top:1194.6px;font-size:27px;line-height:27px;font-weight:400;color:#1b4a52;letter-spacing:1.92px;transform:scaleX(1.1200);transform-origin:0 0;"><b>L-%</b> 4,59</div>
<div class="t " style="left:1445.7px;top:1194.6px;font-size:27px;line-height:27px;font-weight:400;color:#1b4a52;letter-spacing:0.94px;transform:scaleX(1.1200);transform-origin:0 0;"><b>ZZ</b> 341</div>
<div class="t " style="left:1575.7px;top:1194.6px;font-size:27px;line-height:27px;font-weight:400;color:#1b4a52;letter-spacing:0.88px;transform:scaleX(1.1200);transform-origin:0 0;"><b>Hst</b> 30</div>
<div class="t " style="left:648.6px;top:1305.2px;font-size:27px;line-height:27px;font-weight:400;color:#1b4a52;letter-spacing:1.53px;transform:scaleX(1.1200);transform-origin:0 0;"><b>ZS</b> A</div>
<div class="t " style="left:745.6px;top:1305.2px;font-size:27px;line-height:27px;font-weight:400;color:#1b4a52;letter-spacing:0.56px;transform:scaleX(1.1200);transform-origin:0 0;"><b>RZF</b> 105</div>
<div class="t " style="left:895.4px;top:1305.2px;font-size:27px;line-height:27px;font-weight:400;color:#1b4a52;letter-spacing:1.28px;transform:scaleX(1.1200);transform-origin:0 0;"><b>Gew.</b> 43/-/477</div>
<div class="t " style="left:1132.7px;top:1305.2px;font-size:27px;line-height:27px;font-weight:400;color:#1b4a52;letter-spacing:0.81px;transform:scaleX(1.1200);transform-origin:0 0;"><b>Horn</b> P</div>
<div class="t " style="left:1264.7px;top:1305.2px;font-size:27px;line-height:27px;font-weight:400;color:#1b4a52;letter-spacing:2.09px;transform:scaleX(1.1200);transform-origin:0 0;"><b>Farbe</b></div>
<div class="t " style="left:1371.5px;top:1305.2px;font-size:27px;line-height:27px;font-weight:400;color:#fff;">26</div>
<div class="t " style="left:1415.5px;top:1305.2px;font-size:27px;line-height:27px;font-weight:400;color:#fff;">55</div>
<div class="t " style="left:1459.0px;top:1305.2px;font-size:27px;line-height:27px;font-weight:400;color:#fff;">18</div>
</body></html>
